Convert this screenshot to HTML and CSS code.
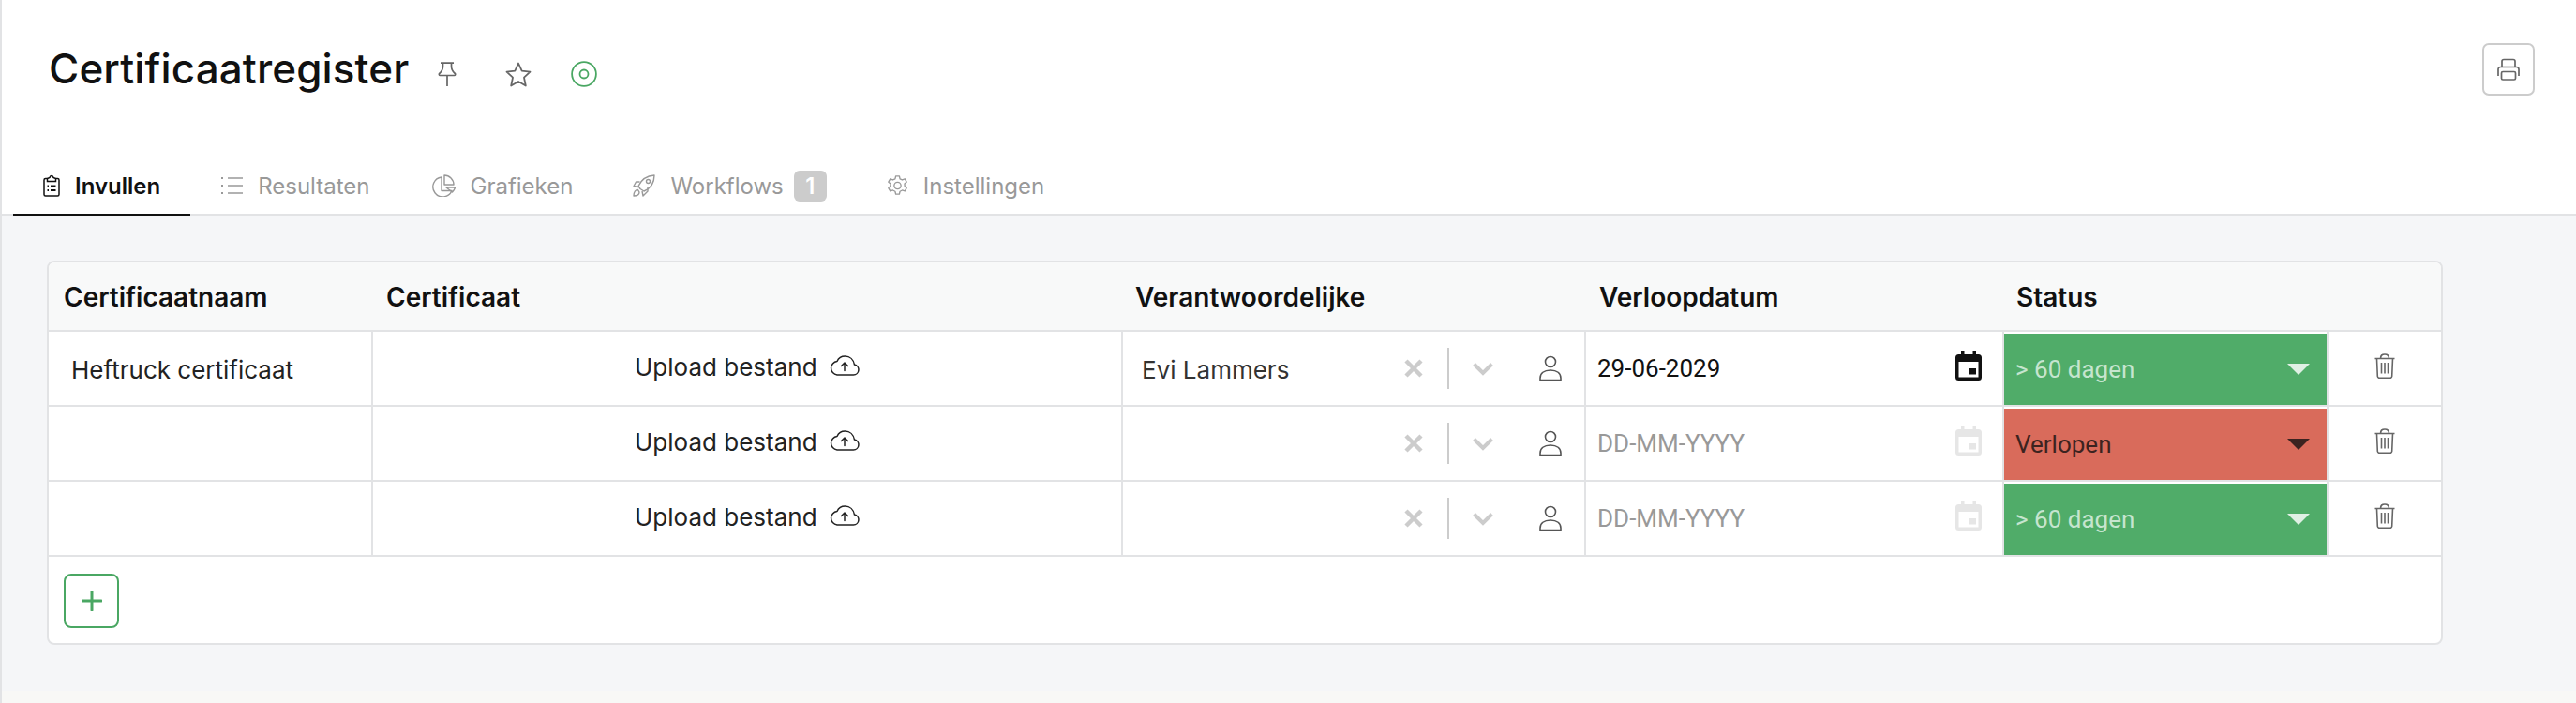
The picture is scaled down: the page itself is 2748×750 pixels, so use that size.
FILE: index.html
```html
<!DOCTYPE html>
<html lang="nl">
<head>
<meta charset="utf-8">
<title>Certificaatregister</title>
<link rel="stylesheet" href="styles.css">
</head>
<body>
<div class="page">
  <header class="top">
    <div class="title-row">
      <h1 class="title">Certificaatregister</h1>
      <svg class="ic-pin" viewBox="0 0 20 26" fill="none" stroke="#666" stroke-width="1.7"><path d="M3 1.2h14M5.500 1.200v3.500c0 3-1.200 5.500-3.800 7.800-.8.700-.3 2 .7 2h15.200c1 0 1.500-1.300.7-2-2.600-2.300-3.800-4.800-3.800-7.800V1.200M10 15v11"/></svg>
      <svg class="ic-star" viewBox="0 0 28 27" fill="none" stroke="#666" stroke-width="1.8" stroke-linejoin="round"><path d="M14 1.500l3.700 8.200 8.800 1-6.500 6 1.800 8.800-7.800-4.500-7.800 4.500L8 16.700l-6.500-6 8.800-1z"/></svg>
      <svg class="ic-target" viewBox="0 0 28 28" fill="none" stroke="#4aa763" stroke-width="1.800"><circle cx="14" cy="14" r="12.900"/><circle cx="14" cy="14" r="4.500"/></svg>
      <button class="print" aria-label="Afdrukken">
        <svg viewBox="0 0 24 24" width="24" height="24" fill="none" stroke="#666" stroke-width="1.700" stroke-linejoin="round"><path d="M5 10V3.500A2 2 0 0 1 7 1.500h10a2 2 0 0 1 2 2V10"/><path d="M1 19v-7a2.500 2.500 0 0 1 2.500-2.500h17A2.500 2.500 0 0 1 23 12v7"/><rect x="4.500" y="14.500" width="15" height="8.500" rx="1.500"/></svg>
      </button>
    </div>
    <nav class="tabs">
      <a class="tab active">
        <svg class="tab-ic i-clip" viewBox="0 0 18 24" fill="none" stroke="#111" stroke-width="1.500"><path d="M4.500 4.500H2.500A1.500 1.500 0 0 0 1 6v15.500A1.500 1.500 0 0 0 2.500 23h13a1.500 1.500 0 0 0 1.500-1.500V6a1.500 1.500 0 0 0-1.500-1.500h-2"/><path d="M4.500 7.500v-3L7 3.500c.5-2.800 3.500-2.800 4 0l2.500 1v3z"/><path d="M4.500 12.500h1.500M4.500 17H6M8 12.500h5.500M8 17h5.500" stroke-width="1.800"/></svg>
        <span>Invullen</span>
      </a>
      <a class="tab">
        <svg class="tab-ic i-23" viewBox="0 0 23 24" fill="none" stroke="#999" stroke-width="1.400"><path d="M7 4h16M7 12h16M7 20h16"/><path d="M0 4h2M0 12h2M0 20h2" stroke-width="2"/></svg>
        <span>Resultaten</span>
      </a>
      <a class="tab">
        <svg class="tab-ic i-27" viewBox="0 0 27 24" fill="none" stroke="#999" stroke-width="1.400" stroke-linejoin="round"><path d="M12 3a10.500 10.500 0 1 0 11 14.500H12z"/><path d="M15 1a10 10 0 0 1 10 10H15z"/><path d="M17 14h9.500c-.5 2-1.500 3.500-3 5z"/></svg>
        <span>Grafieken</span>
      </a>
      <a class="tab">
        <svg class="tab-ic" viewBox="0 0 24 24" fill="none" stroke="#999" stroke-width="1.400" stroke-linejoin="round"><path d="M8 15.500L6 12.500C9 6 15 1.500 23 1c0 8-4 14-11 17z"/><circle cx="16.500" cy="7.500" r="2"/><path d="M7.500 8H3.500L1 12.500l5 1M16 13.500v4.500L11 23l-1-5"/><path d="M5.500 16.500C3 16.500 1 19 1 23c4 0 6-1.500 6-4z"/></svg>
        <span>Workflows</span>
        <b class="badge">1</b>
      </a>
      <a class="tab">
        <svg class="tab-ic i-23" viewBox="0 0 24 24" fill="none" stroke="#999" stroke-width="1.400" stroke-linejoin="round"><circle cx="12" cy="12" r="3.800"/><path d="M10 1.500h4l.7 3 2.500 1.200 2.900-1.200 2 3.500-2.300 2 .2 2.700 2.100 2-2 3.500-2.900-1-2.500 1.300-.7 3h-4l-.7-3-2.500-1.300-2.900 1-2-3.500 2.100-2 .2-2.700-2.300-2 2-3.500 2.900 1.200 2.500-1.200z"/></svg>
        <span>Instellingen</span>
      </a>
    </nav>
  </header>
  <main class="content">
    <section class="card">
      <div class="row head">
        <div class="c c1">Certificaatnaam</div>
        <div class="c c2">Certificaat</div>
        <div class="c c3">Verantwoordelijke</div>
        <div class="c c4">Verloopdatum</div>
        <div class="c c5">Status</div>
        <div class="c c6"></div>
      </div>
      <div class="row">
        <div class="c c1 name">Heftruck certificaat</div>
        <div class="c c2 upload"><span>Upload bestand</span><svg class="cloud" viewBox="0 0 32 22" fill="none" stroke="#222" stroke-width="1.500" stroke-linejoin="round" stroke-linecap="round"><path d="M8 21h17.500a5.500 5.500 0 0 0 1-10.900C25.500 4.500 21.500 1 16.500 1c-4 0-7 2-8.500 5.500A7.300 7.300 0 0 0 8 21z"/><path d="M16 16.500V8M12.500 11.500L16 8l3.500 3.500"/></svg></div>
        <div class="c c3 person"><span class="pname">Evi Lammers</span><svg class="x" viewBox="0 0 20 20"><path d="M2 2l16 16M18 2L2 18" stroke="#ccc" stroke-width="4.500"/></svg><i class="sep"></i><svg class="chev" viewBox="0 0 24 15"><path d="M2.500 2.500l9.500 9.500 9.500-9.500" fill="none" stroke="#ccc" stroke-width="4"/></svg><svg class="user" viewBox="0 0 24 28" fill="none" stroke="#555" stroke-width="1.600"><circle cx="12" cy="7" r="5.500"/><path d="M1 26.500v-2C1 19.500 5 16 12 16s11 3.500 11 8.500v2z"/></svg></div>
        <div class="c c4 date"><span>29-06-2029</span><svg class="cal" viewBox="0 0 28 32"><path fill="#111" fill-rule="evenodd" d="M3.500 4H6V0h3.500v4h9V0H22v4h2.500A3.500 3.500 0 0 1 28 7.500v21a3.500 3.500 0 0 1-3.500 3.500h-21A3.500 3.500 0 0 1 0 28.500v-21A3.500 3.500 0 0 1 3.500 4zM3.500 12v16.500h21V12zM15 19h7v6.500h-7z"/></svg></div>
        <div class="c c5"><div class="status ok"><span>&gt; 60 dagen</span><i class="tri"></i></div></div>
        <div class="c c6"><svg class="trash" viewBox="0 0 22 27" fill="none" stroke="#666" stroke-width="1.600" stroke-linejoin="round"><path d="M.5 5.500h21M2.500 5.500l.8 19a2 2 0 0 0 2 1.800h11.400a2 2 0 0 0 2-1.800l.8-19M6.500 5.500C6.500 2 8 1 11 1s4.500 1 4.500 4.500M7.500 10v11.500M11 10v11.500M14.500 10v11.500"/></svg></div>
      </div>
      <div class="row">
        <div class="c c1 name"></div>
        <div class="c c2 upload"><span>Upload bestand</span><svg class="cloud" viewBox="0 0 32 22" fill="none" stroke="#222" stroke-width="1.500" stroke-linejoin="round" stroke-linecap="round"><path d="M8 21h17.500a5.500 5.500 0 0 0 1-10.900C25.500 4.500 21.500 1 16.500 1c-4 0-7 2-8.500 5.500A7.300 7.300 0 0 0 8 21z"/><path d="M16 16.500V8M12.500 11.500L16 8l3.500 3.500"/></svg></div>
        <div class="c c3 person"><span class="pname"></span><svg class="x" viewBox="0 0 20 20"><path d="M2 2l16 16M18 2L2 18" stroke="#ccc" stroke-width="4.500"/></svg><i class="sep"></i><svg class="chev" viewBox="0 0 24 15"><path d="M2.500 2.500l9.500 9.500 9.500-9.500" fill="none" stroke="#ccc" stroke-width="4"/></svg><svg class="user" viewBox="0 0 24 28" fill="none" stroke="#555" stroke-width="1.600"><circle cx="12" cy="7" r="5.500"/><path d="M1 26.500v-2C1 19.500 5 16 12 16s11 3.500 11 8.500v2z"/></svg></div>
        <div class="c c4 date empty"><span>DD-MM-YYYY</span><svg class="cal" viewBox="0 0 28 32"><path fill="#e6e6e6" fill-rule="evenodd" d="M3.500 4H6V0h3.500v4h9V0H22v4h2.500A3.500 3.500 0 0 1 28 7.500v21a3.500 3.500 0 0 1-3.500 3.500h-21A3.500 3.500 0 0 1 0 28.500v-21A3.500 3.500 0 0 1 3.500 4zM3.500 12v16.500h21V12zM15 19h7v6.500h-7z"/></svg></div>
        <div class="c c5"><div class="status bad"><span>Verlopen</span><i class="tri"></i></div></div>
        <div class="c c6"><svg class="trash" viewBox="0 0 22 27" fill="none" stroke="#666" stroke-width="1.600" stroke-linejoin="round"><path d="M.5 5.500h21M2.500 5.500l.8 19a2 2 0 0 0 2 1.800h11.400a2 2 0 0 0 2-1.800l.8-19M6.500 5.500C6.500 2 8 1 11 1s4.500 1 4.500 4.500M7.500 10v11.500M11 10v11.500M14.500 10v11.500"/></svg></div>
      </div>
      <div class="row">
        <div class="c c1 name"></div>
        <div class="c c2 upload"><span>Upload bestand</span><svg class="cloud" viewBox="0 0 32 22" fill="none" stroke="#222" stroke-width="1.500" stroke-linejoin="round" stroke-linecap="round"><path d="M8 21h17.500a5.500 5.500 0 0 0 1-10.900C25.500 4.500 21.500 1 16.500 1c-4 0-7 2-8.500 5.500A7.300 7.300 0 0 0 8 21z"/><path d="M16 16.500V8M12.500 11.500L16 8l3.500 3.500"/></svg></div>
        <div class="c c3 person"><span class="pname"></span><svg class="x" viewBox="0 0 20 20"><path d="M2 2l16 16M18 2L2 18" stroke="#ccc" stroke-width="4.500"/></svg><i class="sep"></i><svg class="chev" viewBox="0 0 24 15"><path d="M2.500 2.500l9.500 9.500 9.500-9.500" fill="none" stroke="#ccc" stroke-width="4"/></svg><svg class="user" viewBox="0 0 24 28" fill="none" stroke="#555" stroke-width="1.600"><circle cx="12" cy="7" r="5.500"/><path d="M1 26.500v-2C1 19.500 5 16 12 16s11 3.500 11 8.500v2z"/></svg></div>
        <div class="c c4 date empty"><span>DD-MM-YYYY</span><svg class="cal" viewBox="0 0 28 32"><path fill="#e6e6e6" fill-rule="evenodd" d="M3.500 4H6V0h3.500v4h9V0H22v4h2.500A3.500 3.500 0 0 1 28 7.500v21a3.500 3.500 0 0 1-3.500 3.500h-21A3.500 3.500 0 0 1 0 28.500v-21A3.500 3.500 0 0 1 3.500 4zM3.500 12v16.500h21V12zM15 19h7v6.500h-7z"/></svg></div>
        <div class="c c5"><div class="status ok"><span>&gt; 60 dagen</span><i class="tri"></i></div></div>
        <div class="c c6"><svg class="trash" viewBox="0 0 22 27" fill="none" stroke="#666" stroke-width="1.600" stroke-linejoin="round"><path d="M.5 5.500h21M2.500 5.500l.8 19a2 2 0 0 0 2 1.800h11.400a2 2 0 0 0 2-1.800l.8-19M6.500 5.500C6.500 2 8 1 11 1s4.500 1 4.500 4.500M7.500 10v11.500M11 10v11.500M14.500 10v11.500"/></svg></div>
      </div>
      <div class="foot">
        <button class="add" aria-label="Toevoegen"><svg viewBox="0 0 22 22" width="22" height="22"><path d="M11 1v20M1 11h20" stroke="#4aa763" stroke-width="3" stroke-linecap="round"/></svg></button>
      </div>
    </section>
  </main>
  <div class="strip"></div>
</div>
</body>
</html>
```
FILE: styles.css
```css
* { box-sizing: border-box; }
html, body { margin: 0; padding: 0; }
body { font-family: Inter, "Liberation Sans", sans-serif; color: #111; background: #f5f6f8; }
.page { height: 750px; width: 2748px; overflow: hidden; display: flex; flex-direction: column; border-left: 2px solid #e2e3e5; background: #f5f6f8; }
.top { height: 230px; background: #fff; border-bottom: 2px solid #e2e3e5; display: flex; flex-direction: column; flex: none; }
.title-row { height: 168px; display: flex; align-items: flex-start; padding: 46px 44px 0 50px; }
.title { margin: 0; font-size: 44px; line-height: 54px; font-weight: 500; letter-spacing: 0.12px; }
.ic-pin { width: 20px; height: 26px; margin: 20px 0 0 31px; flex: none; }
.ic-star { width: 28px; height: 27px; margin: 20px 0 0 52px; flex: none; }
.ic-target { width: 28px; height: 28px; margin: 19px 0 0 42px; flex: none; }
.print { margin-left: auto; width: 56px; height: 56px; border: 2px solid #ccc; border-radius: 7px; background: #fff; padding: 0; display: flex; align-items: center; justify-content: center; }
.tabs { display: flex; height: 62px; padding-left: 12px; margin-bottom: -2px; }
.tab { display: flex; align-items: center; gap: 17px; padding: 0 31px 0 33px; font-size: 24px; color: #999; height: 62px; border-bottom: 2px solid transparent; }
.tab.active { color: #111; font-weight: 600; border-bottom-color: #111; gap: 16px; padding: 0 32px; }
.tab-ic { width: 24px; height: 24px; flex: none; margin-right: -1px; }
.tab-ic.i-clip { width: 18px; margin-right: 0; }
.tab-ic.i-23 { width: 23px; }
.tab-ic.i-27 { width: 27px; }
.badge { font-weight: 600; background: #ccc; color: #fff; width: 35px; height: 33px; border-radius: 6px; display: flex; align-items: center; justify-content: center; margin-left: -6px; font-size: 24px; }
.content { padding: 48px 0 0 48px; flex: 1; }
.strip { height: 13px; flex: none; background: #f8f8f6; }
.card { width: 2556px; height: 410px; background: #fff; border: 2px solid #e2e3e5; border-radius: 8px; overflow: hidden; }
.row { display: grid; grid-template-columns: 344px 800px 494px 446px 346px 1fr; height: 80px; border-bottom: 2px solid #e2e3e5; }
.row.head { height: 74px; background: #f8f9f9; font-weight: 600; font-size: 28px; color: #111; }
.c { display: flex; align-items: center; min-width: 0; border-left: 2px solid #e2e3e5; }
.c1 { border-left: 0; }
.head .c { border-left: 0; padding: 2px 0 0 15px; align-items: center; }
.head .c1, .head .c2, .head .c4 { padding-left: 16px; }
.name { font-size: 26px; padding: 2px 0 0 24px; font-weight: 400; color: #222; }
.upload { font-size: 26px; padding: 0 0 3px 279px; color: #222; gap: 13px; }
.cloud { width: 32px; height: 22px; flex: none; margin-bottom: 3px; }
.person { padding-left: 20px; font-size: 26px; color: #333; }
.pname { width: 280px; flex: none; padding-top: 2px; }
.x { width: 20px; height: 20px; flex: none; }
.sep { width: 2px; height: 44px; background: #ccc; margin-left: 26px; flex: none; }
.chev { width: 24px; height: 15px; margin-left: 24px; flex: none; }
.user { width: 24px; height: 28px; margin-left: 48px; flex: none; }
.date { font-family: Roboto, sans-serif; font-size: 26px; color: #111; padding: 0 22px 0 12px; justify-content: space-between; }
.empty { color: #999; }
.cal { width: 28px; height: 32px; flex: none; margin-top: -6px; }
.c5 { padding-top: 2px; align-items: stretch; }
.status { flex: 1; font-family: Roboto, sans-serif; font-size: 26px; display: flex; align-items: center; justify-content: space-between; padding: 0 18px 0 12px; }
.status.ok { background: #50ac69; color: #c6e5cf; }
.status.bad { background: #d96b5b; color: #3c2320; }
.tri { width: 0; height: 0; border-left: 12px solid transparent; border-right: 12px solid transparent; border-top: 12px solid currentColor; }
.ok .tri { border-top-color: #dff0e4; }
.c6 { justify-content: center; padding-bottom: 6px; }
.trash { width: 22px; height: 27px; }
.foot { padding: 18px 0 0 16px; }
.add { width: 59px; height: 58px; border: 2px solid #4aa763; border-radius: 8px; background: #fff; padding: 0; display: flex; align-items: center; justify-content: center; }
```
